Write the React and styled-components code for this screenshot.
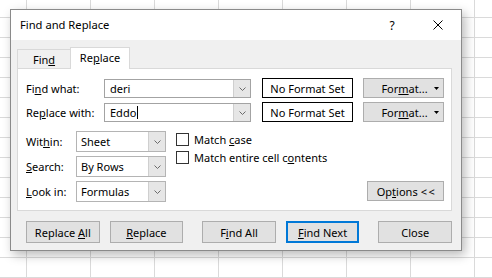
import React from "react";
import styled, { createGlobalStyle, css } from "styled-components";

const GlobalStyle = createGlobalStyle`
  html, body { margin: 0; padding: 0; }
  body {
    width: 492px;
    height: 278px;
    overflow: hidden;
    font-family: "Noto Sans", "Open Sans", sans-serif;
    font-size: 11px;
    color: #000;
    background-color: #fff;
    background-image:
      linear-gradient(to right, #dadada 1px, transparent 1px),
      linear-gradient(to bottom, #dadada 1px, transparent 1px);
    background-size: 64px 20px;
    background-position: 26px 17px;
  }
`;

const Desk = styled.div`
  padding: 9px 0 0 10px;
`;

const Dialog = styled.div`
  width: 452px;
  height: 242px;
  box-sizing: border-box;
  border: 1px solid #8a8a8a;
  background: #f0f0f0;
  box-shadow: 3px 4px 10px rgba(0, 0, 0, 0.28);
  display: flex;
  flex-direction: column;
`;

const TitleBar = styled.div`
  height: 30px;
  background: #fff;
  display: flex;
  align-items: center;
  padding-left: 9px;
`;

const Title = styled.div`
  flex: 1;
  font-size: 11.2px;
  padding-bottom: 1px;
`;

const TitleButton = styled.div`
  width: 46px;
  height: 30px;
  display: flex;
  align-items: center;
  justify-content: center;
  font-size: 12px;
`;

const Body = styled.div`
  flex: 1;
  display: flex;
  flex-direction: column;
  padding: 7px 9px 7px 6px;
`;

const Tabs = styled.div`
  display: flex;
  align-items: flex-end;
  height: 21px;
`;

const Tab = styled.div`
  box-sizing: border-box;
  display: flex;
  align-items: center;
  justify-content: center;
  border: 1px solid #d9d9d9;
  border-bottom: none;
  ${(p) =>
    p.$active
      ? css`
          width: 60px;
          height: 22px;
          margin-bottom: -1px;
          background: #fff;
          position: relative;
          z-index: 1;
          padding-bottom: 2px;
        `
      : css`
          width: 53px;
          height: 19px;
          border-right: none;
          background: #f0f0f0;
          padding-top: 1px;
        `}
`;

const Panel = styled.div`
  box-sizing: border-box;
  height: 143px;
  background: #fff;
  border: 1px solid #d9d9d9;
  padding: 9px 7px 8px 8px;
  display: flex;
  flex-direction: column;
  gap: 9px;
`;

const FieldGrid = styled.div`
  display: grid;
  grid-template-columns: 78px 147px 102px 91px;
  grid-auto-rows: 20px;
  row-gap: 4px;
`;

const Label = styled.div`
  grid-column: 1;
  display: flex;
  align-items: center;
  white-space: nowrap;
`;

const Key = styled.span`
  text-decoration: underline;
  text-underline-offset: 1px;
`;

const Combo = styled.div`
  grid-column: 2;
  box-sizing: border-box;
  display: flex;
  border: 1px solid ${(p) => (p.$light ? "#b4b4b4" : "#a3a3a3")};
  background: #fff;
  height: ${(p) => (p.$tall ? "21px" : "19px")};
  margin-top: ${(p) => (p.$tall ? "0" : "1px")};
`;

const ComboText = styled.div`
  flex: 1;
  display: flex;
  align-items: center;
  padding-left: ${(p) => (p.$pad ? p.$pad : "4px")};
`;

const Caret = styled.span`
  display: inline-block;
  width: 1px;
  height: 13px;
  background: #000;
  margin-left: 1px;
`;

const ArrowBox = styled.div`
  width: 16px;
  display: flex;
  align-items: center;
  justify-content: center;
  background: #e6e6e6;
  border-left: 1px solid #cfcfcf;
`;

const FormatBox = styled.div`
  grid-column: 3;
  margin-left: 11px;
  box-sizing: border-box;
  border: 1px solid #000;
  display: flex;
  align-items: center;
  justify-content: center;
  background: #fff;
`;

const GrayButton = styled.div`
  box-sizing: border-box;
  background: #e1e1e1;
  border: ${(p) => (p.$default ? "2px solid #0078d7" : "1px solid #adadad")};
  display: flex;
  align-items: center;
  justify-content: center;
  white-space: nowrap;
`;

const FormatButton = styled(GrayButton)`
  grid-column: 4;
  margin-left: 10px;
  display: grid;
  grid-template-columns: 1fr auto 1fr;
  align-items: center;
  padding: 0 4px 0 6px;
  & > svg { justify-self: end; }
`;

const OptionsGrid = styled.div`
  display: grid;
  grid-template-columns: 50px 90px 1fr 77px;
  grid-template-rows: repeat(3, 21px);
  row-gap: 4px;
`;

const Checks = styled.div`
  grid-column: 3;
  grid-row: 1 / span 3;
  display: flex;
  flex-direction: column;
  gap: 5px;
  padding: 2px 0 0 10px;
`;

const CheckRow = styled.label`
  display: flex;
  align-items: center;
  gap: 5px;
  height: 13px;
  white-space: nowrap;
`;

const Box = styled.span`
  box-sizing: border-box;
  width: 13px;
  height: 13px;
  border: 1px solid #333;
  background: #fff;
`;

const OptionsButton = styled(GrayButton)`
  grid-column: 4;
  grid-row: 3;
  height: 20px;
  padding-left: 2px;
`;

const Chevrons = styled.span`
  letter-spacing: 1.5px;
  margin-left: 3px;
`;

const ButtonRow = styled.div`
  margin-top: 10px;
  padding-left: 9px;
  display: flex;
  height: 22px;
`;

const ActionButton = styled(GrayButton)`
  width: 74px;
  margin-left: ${(p) => p.$gap || 0}px;
`;

const Chevron = () => (
  <svg width="7" height="4" viewBox="0 0 7 4">
    <polyline points="0.5,0.5 3.5,3.5 6.5,0.5" fill="none" stroke="#6a6a6a" strokeWidth="1" />
  </svg>
);

const DropTri = () => (
  <svg width="5" height="3" viewBox="0 0 5 3">
    <polygon points="0,0 5,0 2.5,3" fill="#000" />
  </svg>
);

const CloseIcon = () => (
  <svg width="10" height="10" viewBox="0 0 10 10">
    <path d="M0.5 0.5 L9.5 9.5 M9.5 0.5 L0.5 9.5" stroke="#000" strokeWidth="1" />
  </svg>
);

const SelectField = ({ children }) => (
  <Combo $tall $light>
    <ComboText>{children}</ComboText>
    <ArrowBox>
      <Chevron />
    </ArrowBox>
  </Combo>
);

const FormatControl = () => (
  <FormatButton>
    <span />
    <span>
      For<Key>m</Key>at...
    </span>
    <DropTri />
  </FormatButton>
);

export default function App() {
  return (
    <>
      <GlobalStyle />
      <Desk>
        <Dialog>
          <TitleBar>
            <Title>Find and Replace</Title>
            <TitleButton>?</TitleButton>
            <TitleButton>
              <CloseIcon />
            </TitleButton>
          </TitleBar>
          <Body>
            <Tabs>
              <Tab>
                <span>
                  Fin<Key>d</Key>
                </span>
              </Tab>
              <Tab $active>
                <span>
                  Re<Key>p</Key>lace
                </span>
              </Tab>
            </Tabs>
            <Panel>
              <FieldGrid>
                <Label>
                  <span>
                    Fi<Key>n</Key>d what:
                  </span>
                </Label>
                <Combo>
                  <ComboText $pad="5px">deri</ComboText>
                  <ArrowBox>
                    <Chevron />
                  </ArrowBox>
                </Combo>
                <FormatBox>No Format Set</FormatBox>
                <FormatControl />

                <Label>
                  <span>
                    Re<Key>p</Key>lace with:
                  </span>
                </Label>
                <Combo>
                  <ComboText $pad="5px">
                    Eddo
                    <Caret />
                  </ComboText>
                  <ArrowBox>
                    <Chevron />
                  </ArrowBox>
                </Combo>
                <FormatBox>No Format Set</FormatBox>
                <FormatControl />
              </FieldGrid>

              <OptionsGrid>
                <Label>
                  <span>
                    Wit<Key>h</Key>in:
                  </span>
                </Label>
                <SelectField>Sheet</SelectField>
                <Checks>
                  <CheckRow>
                    <Box />
                    <span>
                      Match <Key>c</Key>ase
                    </span>
                  </CheckRow>
                  <CheckRow>
                    <Box />
                    <span>
                      Match entire cell c<Key>o</Key>ntents
                    </span>
                  </CheckRow>
                </Checks>
                <Label>
                  <span>
                    <Key>S</Key>earch:
                  </span>
                </Label>
                <SelectField>By Rows</SelectField>
                <Label>
                  <span>
                    <Key>L</Key>ook in:
                  </span>
                </Label>
                <SelectField>Formulas</SelectField>
                <OptionsButton>
                  <span>
                    Op<Key>t</Key>ions
                  </span>
                  <Chevrons>&lt;&lt;</Chevrons>
                </OptionsButton>
              </OptionsGrid>
            </Panel>
            <ButtonRow>
              <ActionButton>
                <span>
                  Replace <Key>A</Key>ll
                </span>
              </ActionButton>
              <ActionButton $gap={10}>
                <span>
                  <Key>R</Key>eplace
                </span>
              </ActionButton>
              <ActionButton $gap={19}>
                <span>
                  F<Key>i</Key>nd All
                </span>
              </ActionButton>
              <ActionButton $gap={10} $default>
                <span>
                  <Key>F</Key>ind Next
                </span>
              </ActionButton>
              <ActionButton $gap={19}>Close</ActionButton>
            </ButtonRow>
          </Body>
        </Dialog>
      </Desk>
    </>
  );
}
